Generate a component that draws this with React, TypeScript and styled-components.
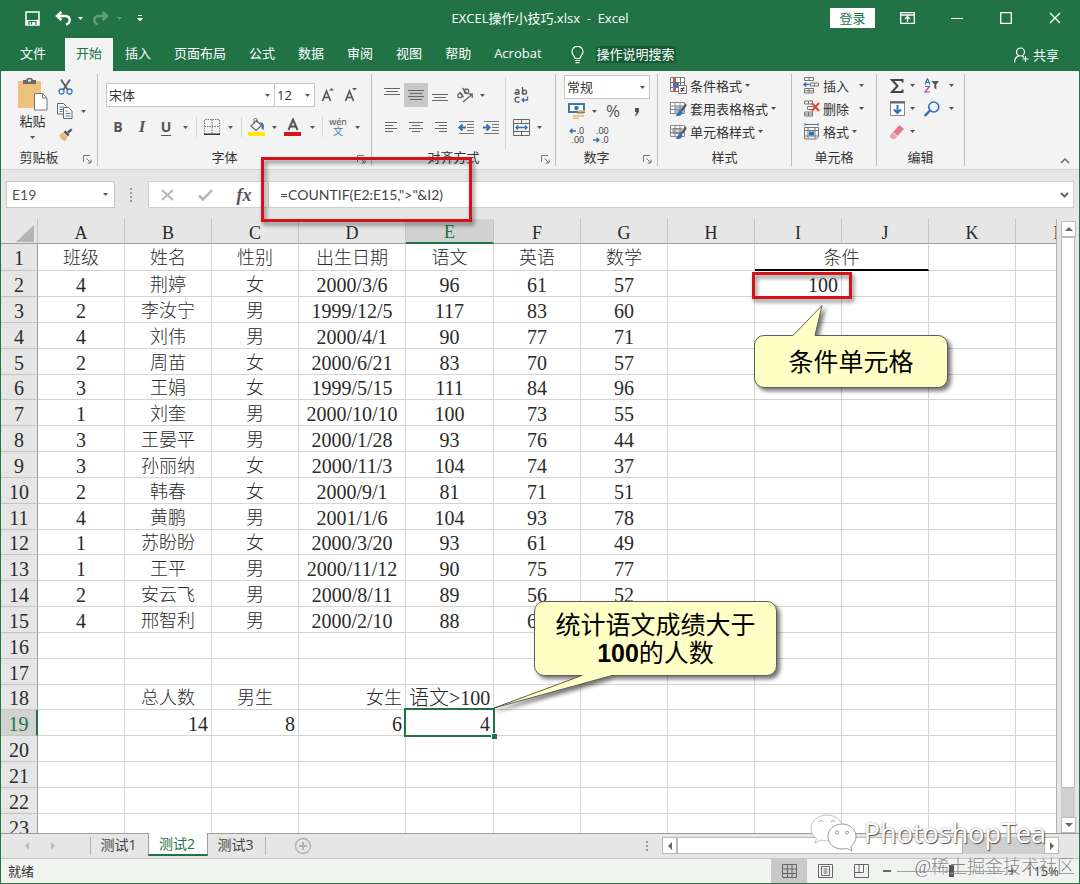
import React from 'react';
import styled, { createGlobalStyle, css } from 'styled-components';

const GREEN = '#217346';
const UI = "'Open Sans', 'Noto Sans CJK SC', sans-serif";
const CELL = "'Liberation Serif', 'Noto Sans CJK SC', serif";

const Global = createGlobalStyle`
  *, *::before, *::after { box-sizing: border-box; }
  body { margin: 0; background: #fff; }
  button, input, select { font: inherit; color: inherit; }
  button { padding: 0; border: 0; background: none; cursor: default; }
  svg { display: block; flex: none; }
`;

const Window = styled.div`
  position: relative;
  display: flex;
  flex-direction: column;
  height: 100vh;
  border: 1px solid ${GREEN};
  border-top: 0;
  background: #e6e6e6;
  overflow: hidden;
  font: 13px/20px ${UI};
  color: #333;
`;

/* ---------- title bar ---------- */
const TitleBar = styled.header`
  flex: none;
  display: grid;
  grid-template-columns: 1fr auto 1fr;
  align-items: center;
  height: 38px;
  padding-bottom: 2px;
  background: ${GREEN};
  color: #fff;
`;
const QuickAccess = styled.div`
  display: flex;
  align-items: center;
  padding-left: 13px;
`;
const Title = styled.h1`
  margin: 0;
  font-size: 13px;
  font-weight: 400;
  white-space: pre;
`;
const WindowButtons = styled.div`
  display: flex;
  align-items: center;
  justify-content: flex-end;
`;
const SignIn = styled.button`
  width: 45px;
  height: 20px;
  margin-right: 8px;
  background: #fff;
  color: ${GREEN};
`;
const Slot = styled.button<{ $w: number; $on?: boolean; $dim?: boolean }>`
  flex: none;
  display: flex;
  align-items: center;
  justify-content: center;
  width: ${p => p.$w}px;
  height: 24px;
  background: ${p => (p.$on ? '#c8c8c8' : 'none')};
  opacity: ${p => (p.$dim ? 0.3 : 1)};
`;

/* ---------- ribbon tabs ---------- */
const Tabs = styled.nav`
  flex: none;
  display: flex;
  align-items: stretch;
  gap: 1px;
  height: 33px;
  padding: 0 20px 0 8px;
  background: ${GREEN};
  color: #fff;
`;
const Tab = styled.button<{ $active?: boolean; $file?: boolean }>`
  padding: 0 11px 3px;
  margin-right: ${p => (p.$file ? 7 : 0)}px;
  background: ${p => (p.$active ? '#f3f3f3' : 'none')};
  color: ${p => (p.$active ? GREEN : '#fff')};
`;
const TellMe = styled.button`
  display: flex;
  align-items: center;
  gap: 12px;
  padding: 0 12px 0 17px;
  span { padding: 0 1px; line-height: 17px; background: #185c37; }
`;
const Share = styled.button`
  display: flex;
  align-items: center;
  gap: 4px;
  margin-left: auto;
`;

/* ---------- ribbon ---------- */
const Ribbon = styled.section`
  flex: none;
  display: flex;
  height: 99px;
  padding: 3px 0;
  background: #f3f3f3;
  border-bottom: 1px solid #d2d2d2;
`;
const Group = styled.div<{ $w: number }>`
  flex: none;
  display: flex;
  flex-direction: column;
  width: ${p => p.$w}px;
  border-right: 1px solid #bdbdbd;
`;
const GroupBody = styled.div<{ $pad?: string }>`
  flex: 1;
  display: flex;
  padding: ${p => p.$pad ?? '0'};
`;
const GroupFoot = styled.div`
  display: flex;
  align-items: center;
  height: 20px;
  margin-bottom: -3px;
  padding-bottom: 4px;
  text-align: center;
  span { flex: 1; }
  button { padding: 4px 5px 0 6px; }
`;
const Stack = styled.div<{ $gap?: number; $line?: boolean }>`
  display: flex;
  flex-direction: column;
  gap: ${p => p.$gap ?? 0}px;
  ${p => p.$line && css`border-right: 1px solid #d6d6d6; margin: -6px 0 0; padding: 6px 3px 0 0;`}
`;
const Row = styled.div`
  display: flex;
  align-items: center;
  height: 24px;
`;
const Divider = styled.i<{ $w: number }>`
  flex: none;
  width: ${p => p.$w}px;
  height: 20px;
  background: linear-gradient(#d6d6d6, #d6d6d6) center / 1px 100% no-repeat;
`;
const PasteButton = styled.button`
  display: flex;
  flex-direction: column;
  align-items: center;
  width: 35px;
  padding-top: 2px;
  svg:last-child { margin-top: 5px; }
`;
const Combo = styled.label<{ $w: number; $h?: number }>`
  display: flex;
  align-items: center;
  width: ${p => p.$w}px;
  height: ${p => p.$h ?? 24}px;
  padding-right: 4px;
  background: #fff;
  border: 1px solid #c6c6c6;
  & + & { border-left: 0; }
  select, input {
    flex: 1;
    min-width: 0;
    height: 100%;
    padding: 0 2px;
    border: 0;
    outline: 0;
    background: none;
    appearance: none;
  }
`;
const Glyph = styled.b<{ $italic?: boolean; $under?: boolean; $size?: number }>`
  font-size: ${p => p.$size ?? 14}px;
  line-height: 16px;
  font-style: ${p => (p.$italic ? 'italic' : 'normal')};
  font-family: ${p => (p.$italic ? "'Liberation Serif', serif" : 'inherit')};
  border-bottom: ${p => (p.$under ? '1px solid #555' : '0')};
  color: #555;
`;
const Command = styled.button`
  display: flex;
  align-items: center;
  gap: 3px;
  height: 23px;
`;
const CaretGap = styled.i<{ $w: number }>`
  width: ${p => p.$w}px;
`;
const Collapse = styled.button`
  align-self: flex-end;
  margin: 0 9px 2px auto;
`;

/* ---------- formula bar ---------- */
const FormulaBar = styled.div`
  flex: none;
  display: flex;
  height: 49px;
  padding: 11px 5px;
`;
const NameBox = styled(Combo)`
  padding-right: 6px;
  input { padding-left: 5px; font-family: Lato, sans-serif; font-size: 14px; color: #555; }
`;
const Dots = styled.div`
  flex: none;
  display: flex;
  align-items: center;
  justify-content: center;
  width: 33px;
`;
const FxBox = styled.div`
  flex: none;
  display: flex;
  align-items: center;
  width: 120px;
  background: #fff;
  border: 1px solid #d0d0d0;
  border-right-color: #e6e6e6;
`;
const FormulaInput = styled.label`
  flex: 1;
  display: flex;
  align-items: center;
  background: #fff;
  border: 1px solid #d0d0d0;
  padding-right: 4px;
  input {
    flex: 1;
    min-width: 0;
    padding: 0 11px;
    border: 0;
    outline: 0;
    background: none;
    font: 14px/20px Lato, sans-serif;
    color: #444;
  }
`;

/* ---------- worksheet ---------- */
const Sheet = styled.main`
  position: relative;
  flex: 1;
  min-height: 0;
  display: flex;
`;
const GridArea = styled.div`
  flex: 1;
  min-width: 0;
  overflow: hidden;
  border-right: 1px solid #b0b0b0;
  background: #fff;
`;
const Table = styled.table`
  table-layout: fixed;
  width: 1101px;
  border-collapse: separate;
  border-spacing: 0;
  font: 18px/22px ${CELL};
  color: #2a2a2a;
  thead tr { height: 25px; }
  tbody tr { height: 26px; }
  tbody tr:nth-child(6n) { height: 25px; }
  tbody tr:first-child { height: 27px; }
`;
const ColHead = styled.th<{ $on?: boolean }>`
  padding: 4px 0 0;
  font-weight: 400;
  background: ${p => (p.$on ? '#d2d2d2' : '#e6e6e6')};
  color: ${p => (p.$on ? GREEN : '#2a2a2a')};
  border-right: 1px solid #c4c4c4;
  border-bottom: ${p => (p.$on ? `2px solid ${GREEN}` : '1px solid #9c9c9c')};
  line-height: 19px;
`;
const Corner = styled(ColHead)`
  svg { margin: 0 3px 0 auto; }
`;
const RowHead = styled.th<{ $on?: boolean }>`
  padding: 2px 0 0;
  font-size: 20px;
  font-weight: 400;
  background: ${p => (p.$on ? '#d2d2d2' : '#e6e6e6')};
  color: ${p => (p.$on ? GREEN : '#2a2a2a')};
  border-right: ${p => (p.$on ? `2px solid ${GREEN}` : '1px solid #9c9c9c')};
  border-bottom: 1px solid #c4c4c4;
`;
const Cell = styled.td<{ $right?: boolean; $num?: boolean; $sel?: boolean; $rule?: boolean }>`
  padding: 2px 3px 0;
  text-align: ${p => (p.$right ? 'right' : 'center')};
  font-size: ${p => (p.$num ? 20 : 18)}px;
  font-weight: 300;
  white-space: nowrap;
  border-right: 1px solid #d4d4d4;
  border-bottom: ${p => (p.$rule ? '2px solid #000' : '1px solid #d4d4d4')};
  ${p => p.$sel && css`
    position: relative;
    &::before {
      content: '';
      position: absolute;
      inset: -2px;
      border: 2px solid ${GREEN};
    }
    &::after {
      content: '';
      position: absolute;
      right: -4px;
      bottom: -4px;
      width: 6px;
      height: 6px;
      background: ${GREEN};
      border: solid #fff;
      border-width: 1px 0 0 1px;
    }
  `}
`;
const VScroll = styled.div`
  flex: none;
  display: flex;
  flex-direction: column;
  width: 22px;
  padding: 2px 4px 0;
`;
const ScrollButton = styled.button`
  flex: none;
  display: flex;
  align-items: center;
  justify-content: center;
  width: 15px;
  height: 16px;
  background: #fff;
  border: 1px solid #bababa;
`;
const Track = styled.div<{ $row?: boolean }>`
  flex: 1;
  display: flex;
  flex-direction: ${p => (p.$row ? 'row' : 'column')};
  background: #cfcfcf;
`;
const Thumb = styled.div<{ $share: number }>`
  flex: 0 0 ${p => p.$share}%;
  background: #fff;
  border: 1px solid #bababa;
`;

/* ---------- annotations ---------- */
const Mark = styled.div<{ $x: number; $y: number; $w: number; $h: number }>`
  position: absolute;
  left: ${p => p.$x}px;
  top: ${p => p.$y}px;
  width: ${p => p.$w}px;
  height: ${p => p.$h}px;
  border: 3px solid #d01418;
  filter: drop-shadow(2px 3px 2px rgba(0, 0, 0, 0.5));
  pointer-events: none;
`;
const Callout = styled.aside<{ $x: number; $y: number; $w: number; $h: number }>`
  position: absolute;
  left: ${p => p.$x}px;
  top: ${p => p.$y}px;
  width: ${p => p.$w}px;
  height: ${p => p.$h}px;
  display: flex;
  align-items: center;
  justify-content: center;
  text-align: center;
  font: 25px/28px 'Liberation Sans', 'Noto Sans CJK SC', sans-serif;
  color: #000;
  svg {
    position: absolute;
    inset: 0;
    overflow: visible;
    filter: drop-shadow(3px 3px 2px rgba(0, 0, 0, 0.55));
  }
  p { position: relative; margin: 0; }
`;

/* ---------- bottom bars ---------- */
const SheetBar = styled.div`
  flex: none;
  display: flex;
  height: 26px;
  border-top: 1px solid #9c9c9c;
  border-bottom: 1px solid #c6c6c6;
  font-size: 14px;
`;
const TabNav = styled.div`
  display: flex;
  align-items: center;
  gap: 18px;
  width: 90px;
  padding-left: 22px;
  border-right: 1px solid #b0b0b0;
  margin: 3px 0;
`;
const SheetTab = styled.button<{ $active?: boolean }>`
  width: ${p => (p.$active ? 60 : 57)}px;
  height: 23px;
  margin-top: -1px;
  padding-right: 2px;
  line-height: 20px;
  color: ${p => (p.$active ? GREEN : '#444')};
  ${p => p.$active && css`
    background: #fff;
    border: solid #9c9c9c;
    border-width: 0 1px;
    border-bottom: 2px solid ${GREEN};
  `}
`;
const AddSheet = styled.button`
  margin: 3px 0;
  padding-left: 28px;
  border-left: 1px solid #b0b0b0;
`;
const HScroll = styled.div`
  flex: none;
  display: flex;
  width: 397px;
  height: 17px;
  margin: 3px 20px 0 7px;
  button { height: 17px; }
`;
const HandleDots = styled.div`
  margin-left: auto;
  padding: 6px 6px 0 0;
`;
const StatusBar = styled.footer`
  flex: none;
  display: flex;
  align-items: center;
  height: 24px;
  padding: 0 20px 0 7px;
  background: #f1f3f1;
  output { margin-right: auto; }
`;
const ZoomRange = styled.input`
  width: 108px;
  height: 14px;
  margin: 0 2px;
  appearance: none;
  background: linear-gradient(#a0a0a0, #a0a0a0) center / 100% 1px no-repeat;
  &::-webkit-slider-thumb {
    appearance: none;
    width: 5px;
    height: 12px;
    background: #555;
  }
`;
const ZoomValue = styled.button`
  width: 42px;
  text-align: right;
`;
const Watermark = styled.div`
  position: absolute;
  right: 33px;
  bottom: 30px;
  display: flex;
  align-items: center;
  gap: 6px;
  font: 27px/40px 'Open Sans', sans-serif;
  color: #fff;
  text-shadow: 1px 1px 1px #555, 0 0 2px #999;
  pointer-events: none;
`;
const Credit = styled.div`
  position: absolute;
  right: 4px;
  bottom: 3px;
  font: 300 18px/26px 'Liberation Serif', 'Noto Sans CJK SC', serif;
  color: rgba(100, 100, 100, 0.8);
  text-shadow: 0 0 1px #fff;
  pointer-events: none;
`;

/* ---------- drawings ---------- */
const Caret = ({ color = '#555' }: { color?: string }) => (
  <svg width="5" height="3" viewBox="0 0 5 3"><path d="M0 0h5L2.5 3z" fill={color} /></svg>
);
const Lines = ({ w, rows }: { w: number[]; rows: 'left' | 'center' | 'right' }) => (
  <svg width="16" height="14" viewBox="0 0 16 14" stroke="#666" fill="none">
    {w.map((n, i) => {
      const x = rows === 'left' ? 1 : rows === 'right' ? 15 - n : 8 - n / 2;
      return <path key={i} d={`M${x} ${i * 3 + 2.5}h${n}`} />;
    })}
  </svg>
);
const Launcher = () => (
  <button aria-label="对话框启动器">
    <svg width="9" height="9" viewBox="0 0 9 9" fill="none" stroke="#777">
      <path d="M.5 7V.5H7M3.500 3.500l4 4M8 4.500V8H4.500" />
    </svg>
  </button>
);
const SaveIcon = () => (
  <svg width="15" height="15" viewBox="0 0 15 15" fill="none" stroke="#fff" strokeWidth="1.500">
    <path d="M1 1h13v13H1z" /><path d="M1 9h13v5H1z" fill="#fff" stroke="none" /><path d="M4 14v-3.500h7V14M6.500 11v2.500" stroke={GREEN} strokeWidth="1.200" />
  </svg>
);
const UndoIcon = ({ flip }: { flip?: boolean }) => (
  <svg width="17" height="15" viewBox="0 0 17 15" fill="none" stroke="#fff" strokeWidth="2.400">
    <g transform={flip ? 'matrix(-1 0 0 1 17 0)' : undefined}>
      <path d="M6.500 1L2 5l4.500 4M2.500 5H10.500c5.500.5 5.500 7 .5 8.500" />
    </g>
  </svg>
);
const CustomizeIcon = () => (
  <svg width="6" height="7" viewBox="0 0 6 7" fill="#fff"><path d="M1 0h4v1H1zM0 3h6L3 6.500z" /></svg>
);
const RibbonDisplayIcon = () => (
  <svg width="15" height="12" viewBox="0 0 15 12" fill="none" stroke="#fff" strokeWidth="1.300">
    <path d="M.7.700h13.600v10.600H.700zM.700 3h13.600M7.500 10V5M5 7l2.500-2.500L10 7" />
  </svg>
);
const BulbIcon = () => (
  <svg width="13" height="18" viewBox="0 0 13 18" fill="none" stroke="#fff" strokeWidth="1.200">
    <path d="M4 12.500c0-2.500-3-3.500-3-6.700a5.500 5.500 0 0 1 11 0c0 3.200-3 4.200-3 6.700zM4 14.500h5M4.500 16.700h4" />
  </svg>
);
const ShareIcon = () => (
  <svg width="15" height="16" viewBox="0 0 15 16" fill="none" stroke="#fff" strokeWidth="1.200">
    <circle cx="6.500" cy="5" r="4" /><path d="M.6 15.500c0-3.500 1.900-5.700 4-6.500M8.500 9l1.500 1.500M11.500 9v6M8.500 12h6" />
  </svg>
);
const PasteIcon = () => (
  <svg width="31" height="34" viewBox="0 0 31 34">
    <path d="M1 4h23v27H1z" fill="#eec27c" />
    <path d="M6 7V3h3c0-3 7-3 7 0h3v4z" fill="#6b6b6b" /><path d="M11 2.500h3v2h-3z" fill="#f3f3f3" />
    <path d="M17.500 16.500h8l4.500 4.500v12H17.500z" fill="#fff" stroke="#777" /><path d="M25.500 16.500V21H30" fill="none" stroke="#777" />
  </svg>
);
const CutIcon = () => (
  <svg width="15" height="16" viewBox="0 0 15 16" fill="none">
    <path d="M3 .5l6.500 10M12 .5l-6.500 10" stroke="#5c5c5c" strokeWidth="1.800" />
    <circle cx="3.500" cy="12.500" r="2.500" stroke="#3f78b8" strokeWidth="1.300" /><circle cx="11.500" cy="12.500" r="2.500" stroke="#3f78b8" strokeWidth="1.300" />
  </svg>
);
const CopyIcon = () => (
  <svg width="16" height="16" viewBox="0 0 16 16" fill="#fff" stroke="#666">
    <path d="M.5.500h6l3 3V11h-9z" /><path d="M2.500 4h4M2.500 6.500h4M2.500 8.500h3" stroke="#3f78b8" />
    <path d="M6.500 4.500h5l3.500 3.500v7.500H6.500z" /><path d="M8.500 8h2M8.500 10.500h5M8.500 13h5" stroke="#3f78b8" />
  </svg>
);
const PainterIcon = () => (
  <svg width="15" height="14" viewBox="0 0 15 14">
    <path d="M1 7l4-2.500L9.500 9 7 13.500C4 12 2 10 1 7z" fill="#ecb877" />
    <path d="M5.500 4l2-1.500 4 4-1.500 2z" fill="#555" /><path d="M9 3.500L13 .5l1.500 1.500L11 5.500z" fill="#555" />
  </svg>
);
const GrowIcon = ({ down }: { down?: boolean }) => (
  <svg width="14" height="16" viewBox="0 0 14 16" fill="none" stroke="#555" strokeWidth="1.600">
    <path d="M1.500 14L5.500 4l4 10M3 10.500h5" />
    <path d={down ? 'M8 1h5L10.500 3.500z' : 'M8 3.500h5L10.500 1z'} fill="#3f5f7f" stroke="none" />
  </svg>
);
const BordersIcon = () => (
  <svg width="16" height="16" viewBox="0 0 16 16" fill="none" stroke="#777">
    <path d="M.5 15V.5h15V15M8 .5V15M.5 7.500h15" strokeDasharray="1.500 1" /><path d="M0 15.200h16" stroke="#333" strokeWidth="1.500" />
  </svg>
);
const FillIcon = () => (
  <svg width="18" height="18" viewBox="0 0 18 18" fill="none">
    <path d="M8.500 2.500l5 5-5.500 5-5-4.500z" fill="#fff" stroke="#666" strokeWidth="1.200" />
    <path d="M6 6V1.500c0-1.500 3-1.500 3 0V5" stroke="#666" /><path d="M12 4c4.500 1 4.500 4 3.500 8-1.500-.5-2.500-2-2-4.500z" fill="#3f78b8" />
    <path d="M0 14h17v4H0z" fill="#ffeb00" />
  </svg>
);
const FontColorIcon = () => (
  <svg width="18" height="18" viewBox="0 0 18 18" fill="none">
    <path d="M4.500 12L9 1.500 13.500 12M6 8.500h6" stroke="#555" strokeWidth="2" /><path d="M0 14h17v4H0z" fill="#d8141c" />
  </svg>
);
const Phonetic = styled.span`
  display: flex;
  flex-direction: column;
  align-items: center;
  font-size: 9px;
  line-height: 9px;
  color: #444;
  em { font-style: normal; font-size: 10px; line-height: 11px; color: #3f78b8; }
`;
const OrientIcon = () => (
  <svg width="18" height="16" viewBox="0 0 18 16" fill="none" stroke="#666" strokeWidth="1.300">
    <circle cx="4" cy="8.500" r="2.200" /><path d="M3.500 5l4 5M6.500 1l4.500 6" /><circle cx="10.500" cy="4.200" r="2.200" />
    <path d="M7 15L16 7.500M12.500 7H16.200V11" />
  </svg>
);
const WrapIcon = () => (
  <svg width="15" height="17" viewBox="0 0 15 17" fill="none" stroke="#555" strokeWidth="1.300">
    <path d="M1.500 3.200c2-1 3.500-.2 3.500 1V7.500M5 5.200c-3 0-4 .3-4 1.300s2.500 1.500 4 0M8.500 0v7.500" /><circle cx="10.500" cy="5.200" r="2" />
    <path d="M5.500 10.700c-2-1-4.500-.5-4.500 2s2.500 3 4.500 2" /><path d="M13.500 9.500v3.500H8M10 11l-2 2 2 2" stroke="#3f78b8" />
  </svg>
);
const IndentIcon = ({ inc }: { inc?: boolean }) => (
  <svg width="17" height="15" viewBox="0 0 17 15" fill="none" stroke="#777">
    <path d="M1 1.500h15M9 4.500h7M9 7.500h7M9 10.500h7M1 13.500h15" />
    <path d={inc ? 'M0 7.500h6M3.500 4.500l3 3-3 3' : 'M2 7.500h6M4.500 4.500l-3 3 3 3'} stroke="#2f6fb5" strokeWidth="2" />
  </svg>
);
const MergeIcon = () => (
  <svg width="17" height="17" viewBox="0 0 17 17" fill="none" stroke="#666">
    <path d="M.5.500h16v16H.500zM.500 4.500h16M.500 12.500h16M8.500 .5v4M8.500 12.500v4" />
    <path d="M3 8.500h11M5 6.500l-2 2 2 2M12 6.500l2 2-2 2" stroke="#2f6fb5" strokeWidth="1.300" />
  </svg>
);
const CurrencyIcon = () => (
  <svg width="18" height="16" viewBox="0 0 18 16" fill="none">
    <path d="M1 1h15v8H1z" fill="#fff" stroke="#3f78a8" strokeWidth="2" /><circle cx="8.500" cy="5" r="2.300" fill="#3f78a8" />
    <path d="M10 8h7M9 10.500h7M5 13h6M10 13h6M5 15.300h6" stroke="#eeb877" strokeWidth="1.600" />
  </svg>
);
const DecimalText = styled.span`
  display: flex;
  flex-direction: column;
  font: 9px/9px 'Open Sans', sans-serif;
  color: #333;
  span { display: flex; align-items: center; justify-content: flex-end; gap: 1px; }
`;
const TinyArrow = ({ right }: { right?: boolean }) => (
  <svg width="7" height="6" viewBox="0 0 7 6" fill="none" stroke="#2f6fb5" strokeWidth="1.300">
    <path d={right ? 'M0 3h6M3.500.700L6 3 3.500 5.300' : 'M7 3H1M3.500.700L1 3l2.500 2.300'} />
  </svg>
);
const CondIcon = () => (
  <svg width="17" height="17" viewBox="0 0 17 17" fill="#fff" stroke="#777">
    <path d="M.5.500h14v14H.500zM5.500.500v14M10.500.500v14M.500 5.500h14M.500 10.500h14" />
    <path d="M3 1h3v4H3z" fill="#d9534a" stroke="none" /><path d="M3 6h6v4H3z" fill="#3f78b8" stroke="none" /><path d="M3 11h3v3H3z" fill="#d9534a" stroke="none" />
    <path d="M8.500 8.500h8v8h-8z" /><path d="M10.500 11.500h4M10.500 13.500h4M14 10l-3 5" stroke="#444" />
  </svg>
);
const TableFormatIcon = ({ single }: { single?: boolean }) => (
  <svg width="17" height="16" viewBox="0 0 17 16" fill="#fff" stroke="#888">
    <path d="M.5 1.500h14v11H.500z" />
    {single ? <path d="M3 4.500h8v5H3z" fill="#c6d8ea" /> : <path d="M5 5h9v7H5z" fill="#a8c4e0" stroke="none" />}
    <path d="M.5 5h14M.500 8.500h14M5 1.500v11M10 1.500v11" fill="none" />
    <path d="M16 2l-5.500 7 1.500 1.500L16.500 5z" fill="#555" stroke="none" /><path d="M10.500 9c-3 .5-2 4-5 5.500 3 1.500 7 0 7-3.500z" fill="#2f6fb5" stroke="none" />
  </svg>
);
const InsertIcon = () => (
  <svg width="17" height="17" viewBox="0 0 17 17" fill="none" stroke="#777">
    <path d="M1.500.500h9v3h-9zM6 .5v3M1.500 11.500h9v4.500h-9zM6 11.500V16M1.500 13.800h9M7.500 6h8v3h-8zM11.500 6v3" /><path d="M6.500 7.500H1M3 5.500l-2 2 2 2" stroke="#2f6fb5" strokeWidth="1.500" />
  </svg>
);
const DeleteIcon = () => (
  <svg width="17" height="17" viewBox="0 0 17 17" fill="none" stroke="#777">
    <path d="M1.500 1h8v3h-8zM5.500 1v3M4.500 6.500h6v3h-6zM1.500 12h8v4h-8zM5.500 12v4M1.500 14h8" /><path d="M9 3l7 8M16 3l-7 8" stroke="#dc4b32" strokeWidth="2" />
  </svg>
);
const FormatIcon = () => (
  <svg width="17" height="17" viewBox="0 0 17 17" fill="none" stroke="#777">
    <path d="M1.500 4.500h14v9l-2 2.500h-12zM5 4.500v11M12 4.500v11M1.500 7.500h14M1.500 13h14" /><path d="M6 8.500h5v4H6z" fill="#2f6fb5" stroke="none" />
    <path d="M2 1.500h13M2 0v3M15 0v3" stroke="#3f78b8" />
  </svg>
);
const SigmaIcon = () => (
  <svg width="14" height="14" viewBox="0 0 14 14" fill="none" stroke="#444" strokeWidth="2">
    <path d="M12.500 3.500V1H2l5.500 6L2 13h10.500v-2.500" />
  </svg>
);
const SortIcon = () => (
  <svg width="16" height="15" viewBox="0 0 16 15" fill="none" strokeWidth="1.200">
    <path d="M1 6.500L3.500.500 6 6.500M2 4.500h3" stroke="#2f6fb5" /><path d="M1 8.500h4.500L1 14h5" stroke="#9a50a0" />
    <path d="M7.500 3H15l-2.700 3.500v5l-2-1.500V6.500z" fill="#555" />
  </svg>
);
const FillDownIcon = () => (
  <svg width="15" height="15" viewBox="0 0 15 15" fill="#fff" stroke="#888">
    <path d="M.5.500h14v14H.500z" /><path d="M0 1.500h15" stroke="#666" strokeWidth="2" /><path d="M7.500 4v8M4 8.500l3.500 3.500L11 8.500" fill="none" stroke="#2f6fb5" strokeWidth="2" />
  </svg>
);
const FindIcon = () => (
  <svg width="16" height="16" viewBox="0 0 16 16" fill="none" stroke="#2f6fb5">
    <circle cx="9.800" cy="6" r="5" strokeWidth="1.600" /><path d="M6 9.500L.8 15" strokeWidth="2.400" />
  </svg>
);
const EraserIcon = () => (
  <svg width="14" height="14" viewBox="0 0 14 14">
    <path d="M9.500 0L14 4 7.500 11 3 7z" fill="#e8798f" /><path d="M2.500 7.500L7 11.500 5 14H2L0 12v-2z" fill="#f0a0b0" />
  </svg>
);
const GripDots = ({ n = 4 }: { n?: number }) => (
  <svg width="3" height={n * 4} viewBox={`0 0 3 ${n * 4}`} fill="#9a9a9a">
    {Array.from({ length: n }, (_, i) => <path key={i} d={`M0 ${i * 4 + 1}h2v2H0z`} />)}
  </svg>
);
const Tri = ({ dir, color = '#666' }: { dir: 'up' | 'down' | 'left' | 'right'; color?: string }) => {
  const d = { up: 'M0 6h8L4 2z', down: 'M0 2h8L4 6z', left: 'M6 0v8L2 4z', right: 'M2 0v8l4-4z' }[dir];
  return <svg width="8" height="8" viewBox="0 0 8 8" fill={color}><path d={d} /></svg>;
};
const WeChatIcon = () => (
  <svg width="48" height="38" viewBox="0 0 48 38" fill="#fff" stroke="#9a9a9a" strokeWidth="1">
    <path d="M17 1C8 1 1 7 1 14.500c0 4 2 7.500 5.500 10L5 29l6-3c2 .6 4 .9 6 .9 9 0 16-5.500 16-12.500S26 1 17 1z" stroke="#c4c4c4" />
    <path d="M32 10c-8 0-14 5.500-14 12.500S24 35 32 35c1.500 0 3-.2 4.500-.7L42 37l-1.200-4.500c3.200-2.300 5.200-6 5.200-10C46 15.500 40 10 32 10z" />
    <path d="M9 8c1-2 3-2 4 0M21 8c1-2 3-2 4 0" fill="none" /><circle cx="27" cy="18.500" r="1.500" /><circle cx="37" cy="18.500" r="1.500" />
  </svg>
);

/* ---------- data ---------- */
const letters = 'ABCDEFGHIJKL'.split('');
const widths = [87, 87, 87, 107, 88, 87, 87, 87, 87, 87, 87, 87];
const students: string[][] = [
  ['4', '荆婷', '女', '2000/3/6', '96', '61', '57'],
  ['2', '李汝宁', '男', '1999/12/5', '117', '83', '60'],
  ['4', '刘伟', '男', '2000/4/1', '90', '77', '71'],
  ['2', '周苗', '女', '2000/6/21', '83', '70', '57'],
  ['3', '王娟', '女', '1999/5/15', '111', '84', '96'],
  ['1', '刘奎', '男', '2000/10/10', '100', '73', '55'],
  ['3', '王晏平', '男', '2000/1/28', '93', '76', '44'],
  ['3', '孙丽纳', '女', '2000/11/3', '104', '74', '37'],
  ['2', '韩春', '女', '2000/9/1', '81', '71', '51'],
  ['4', '黄鹏', '男', '2001/1/6', '104', '93', '78'],
  ['1', '苏盼盼', '女', '2000/3/20', '93', '61', '49'],
  ['1', '王平', '男', '2000/11/12', '90', '75', '77'],
  ['2', '安云飞', '男', '2000/8/11', '89', '56', '52'],
  ['4', '邢智利', '男', '2000/2/10', '88', '67', ''],
];
const sheet: string[][] = [
  ['班级', '姓名', '性别', '出生日期', '语文', '英语', '数学', '', '条件'],
  ...students,
  [], [],
  ['', '总人数', '男生', '女生', '语文>100'],
  ['', '14', '8', '6', '4'],
  [], [], [], [],
];
sheet[1][8] = '100';

const isRight = (r: number, c: number) => r === 18 || (r === 17 && c > 2) || (r === 1 && c === 8);

export default function App() {
  return (
    <Window>
      <Global />
      <TitleBar>
        <QuickAccess>
          <Slot $w={36} aria-label="保存"><SaveIcon /></Slot>
          <Slot $w={26} aria-label="撤消"><UndoIcon /></Slot>
          <Slot $w={8} aria-label="撤消列表"><Caret color="#fff" /></Slot>
          <Slot $w={32} $dim aria-label="恢复"><UndoIcon flip /></Slot>
          <Slot $w={6} $dim aria-label="恢复列表"><Caret color="#fff" /></Slot>
          <Slot $w={36} aria-label="自定义快速访问工具栏"><CustomizeIcon /></Slot>
        </QuickAccess>
        <Title>{'EXCEL操作小技巧.xlsx  -  Excel'}</Title>
        <WindowButtons>
          <SignIn>登录</SignIn>
          <Slot $w={49} aria-label="功能区显示选项"><RibbonDisplayIcon /></Slot>
          <Slot $w={49} aria-label="最小化"><svg width="12" height="12" stroke="#fff"><path d="M0 6.500h12" /></svg></Slot>
          <Slot $w={49} aria-label="最大化"><svg width="12" height="12" fill="none" stroke="#fff" strokeWidth="1.300"><path d="M.7.700h10.600v10.600H.700z" /></svg></Slot>
          <Slot $w={49} aria-label="关闭"><svg width="12" height="12" stroke="#fff" strokeWidth="1.400"><path d="M1 1l10 10M11 1L1 11" /></svg></Slot>
        </WindowButtons>
      </TitleBar>

      <Tabs>
        <Tab $file>文件</Tab>
        <Tab $active>开始</Tab>
        {['插入', '页面布局', '公式', '数据', '审阅', '视图', '帮助', 'Acrobat'].map(t => <Tab key={t}>{t}</Tab>)}
        <TellMe><BulbIcon /><span>操作说明搜索</span></TellMe>
        <Share><ShareIcon />共享</Share>
      </Tabs>

      <Ribbon>
        <Group $w={97}>
          <GroupBody $pad="1px 0 0 14px">
            <PasteButton><PasteIcon />粘贴<Caret /></PasteButton>
            <Stack>
              <Row><Slot $w={30} aria-label="剪切"><CutIcon /></Slot></Row>
              <Row><Slot $w={30} aria-label="复制"><CopyIcon /></Slot><Slot $w={6} aria-label="复制选项"><Caret /></Slot></Row>
              <Row><Slot $w={30} aria-label="格式刷"><PainterIcon /></Slot></Row>
            </Stack>
          </GroupBody>
          <GroupFoot><span>剪贴板</span><Launcher /></GroupFoot>
        </Group>

        <Group $w={274}>
          <GroupBody $pad="9px 0 0 8px">
            <Stack $gap={8}>
              <Row>
                <Combo $w={169}><select aria-label="字体"><option>宋体</option></select><Caret /></Combo>
                <Combo $w={40}><select aria-label="字号"><option>12</option></select><Caret /></Combo>
                <Slot $w={26} aria-label="增大字号"><GrowIcon /></Slot>
                <Slot $w={20} aria-label="减小字号"><GrowIcon down /></Slot>
              </Row>
              <Row>
                <Slot $w={24}><Glyph>B</Glyph></Slot>
                <Slot $w={24}><Glyph $italic $size={17}>I</Glyph></Slot>
                <Slot $w={24}><Glyph $under>U</Glyph></Slot>
                <Slot $w={14} aria-label="下划线选项"><Caret /></Slot>
                <Divider $w={8} />
                <Slot $w={24} aria-label="边框"><BordersIcon /></Slot>
                <Slot $w={12} aria-label="边框选项"><Caret /></Slot>
                <Divider $w={10} />
                <Slot $w={22} aria-label="填充颜色"><FillIcon /></Slot>
                <Slot $w={12} aria-label="填充颜色选项"><Caret /></Slot>
                <Slot $w={26} aria-label="字体颜色"><FontColorIcon /></Slot>
                <Slot $w={12} aria-label="字体颜色选项"><Caret /></Slot>
                <Divider $w={8} />
                <Slot $w={24}><Phonetic>wén<em>文</em></Phonetic></Slot>
                <Slot $w={14} aria-label="拼音选项"><Caret /></Slot>
              </Row>
            </Stack>
          </GroupBody>
          <GroupFoot><span>字体</span><Launcher /></GroupFoot>
        </Group>

        <Group $w={184}>
          <GroupBody $pad="9px 0 0 8px">
            <Stack $gap={8} $line>
              <Row>
                <Slot $w={24} aria-label="顶端对齐"><svg width="16" height="16" stroke="#666"><path d="M0 1.500h16M2 4.500h12M0 7.500h16" /></svg></Slot>
                <Slot $w={24} $on aria-label="垂直居中"><svg width="16" height="16" stroke="#666"><path d="M0 3.500h16M2 6.500h12M0 9.500h16M2 12.500h12" /></svg></Slot>
                <Slot $w={24} aria-label="底端对齐"><svg width="16" height="16" stroke="#666"><path d="M0 7.500h16M2 10.500h12M0 13.500h16" /></svg></Slot>
                <Slot $w={26} aria-label="方向"><OrientIcon /></Slot>
                <Slot $w={8} aria-label="方向选项"><Caret /></Slot>
              </Row>
              <Row>
                <Slot $w={24} aria-label="左对齐"><Lines w={[12, 8, 12, 8]} rows="left" /></Slot>
                <Slot $w={24} aria-label="居中"><Lines w={[14, 8, 14, 8]} rows="center" /></Slot>
                <Slot $w={24} aria-label="右对齐"><Lines w={[12, 8, 12, 8]} rows="right" /></Slot>
                <Slot $w={28} aria-label="减少缩进量"><IndentIcon /></Slot>
                <Slot $w={22} aria-label="增加缩进量"><IndentIcon inc /></Slot>
              </Row>
            </Stack>
            <Stack $gap={8}>
              <Row><Slot $w={30} aria-label="自动换行"><WrapIcon /></Slot></Row>
              <Row><Slot $w={30} aria-label="合并后居中"><MergeIcon /></Slot><Slot $w={6} aria-label="合并选项"><Caret /></Slot></Row>
            </Stack>
          </GroupBody>
          <GroupFoot><span>对齐方式</span><Launcher /></GroupFoot>
        </Group>

        <Group $w={102}>
          <GroupBody $pad="1px 0 0 8px">
            <Stack>
              <Row><Combo $w={86}><select aria-label="数字格式"><option>常规</option></select><Caret /></Combo></Row>
              <Row>
                <Slot $w={25} aria-label="会计数字格式"><CurrencyIcon /></Slot>
                <Slot $w={10} aria-label="会计格式选项"><Caret /></Slot>
                <Slot $w={28}><Glyph as="span" $size={17}>%</Glyph></Slot>
                <Slot $w={20} aria-label="千位分隔样式"><svg width="6" height="9" fill="#555"><path d="M1 1h4v4L2 9H1l1.500-4H1z" /></svg></Slot>
              </Row>
              <Row>
                <Slot $w={25}><DecimalText><span><TinyArrow />.0</span><span>.00</span></DecimalText></Slot>
                <Slot $w={24}><DecimalText><span>.00</span><span><TinyArrow right />.0</span></DecimalText></Slot>
              </Row>
            </Stack>
          </GroupBody>
          <GroupFoot><span>数字</span><Launcher /></GroupFoot>
        </Group>

        <Group $w={134}>
          <GroupBody $pad="0 0 0 12px">
            <Stack>
              <Command><CondIcon />条件格式<Caret /></Command>
              <Command><TableFormatIcon />套用表格格式<Caret /></Command>
              <Command><TableFormatIcon single />单元格样式<Caret /></Command>
            </Stack>
          </GroupBody>
          <GroupFoot><span>样式</span></GroupFoot>
        </Group>

        <Group $w={85}>
          <GroupBody $pad="0 0 0 11px">
            <Stack>
              <Command><InsertIcon />插入<CaretGap $w={4} /><Caret /></Command>
              <Command><DeleteIcon />删除<CaretGap $w={4} /><Caret /></Command>
              <Command><FormatIcon />格式<Caret /></Command>
            </Stack>
          </GroupBody>
          <GroupFoot><span>单元格</span></GroupFoot>
        </Group>

        <Group $w={88}>
          <GroupBody $pad="0 0 0 10px">
            <Stack>
              <Command>
                <Slot $w={20} aria-label="自动求和" as="span"><SigmaIcon /></Slot><Caret />
                <Slot $w={28} aria-label="排序和筛选" as="span"><SortIcon /></Slot><Caret />
              </Command>
              <Command>
                <Slot $w={20} aria-label="填充" as="span"><FillDownIcon /></Slot><Caret />
                <Slot $w={28} aria-label="查找和选择" as="span"><FindIcon /></Slot><Caret />
              </Command>
              <Command><Slot $w={20} aria-label="清除" as="span"><EraserIcon /></Slot><Caret /></Command>
            </Stack>
          </GroupBody>
          <GroupFoot><span>编辑</span></GroupFoot>
        </Group>
        <Collapse aria-label="折叠功能区">
          <svg width="10" height="7" fill="none" stroke="#666" strokeWidth="1.500"><path d="M1 6l4-4 4 4" /></svg>
        </Collapse>
      </Ribbon>

      <FormulaBar>
        <NameBox $w={109} $h={27}><input aria-label="名称框" defaultValue="E19" /><Caret /></NameBox>
        <Dots><GripDots /></Dots>
        <FxBox>
          <Slot $w={36} aria-label="取消"><svg width="13" height="12" stroke="#b5b5b5" strokeWidth="1.800"><path d="M1 1l11 10M12 1L1 11" /></svg></Slot>
          <Slot $w={40} aria-label="输入"><svg width="15" height="12" fill="none" stroke="#b5b5b5" strokeWidth="2.500"><path d="M1 6.500l4 4L14 1" /></svg></Slot>
          <Slot $w={38} aria-label="插入函数"><Glyph $italic $size={18}>fx</Glyph></Slot>
        </FxBox>
        <FormulaInput>
          <input aria-label="编辑栏" defaultValue={'=COUNTIF(E2:E15,">"&I2)'} />
          <svg width="9" height="6" fill="none" stroke="#666" strokeWidth="2"><path d="M1 1l3.500 3.500L8 1" /></svg>
        </FormulaInput>
      </FormulaBar>

      <Sheet>
        <GridArea>
          <Table>
            <colgroup>
              <col style={{ width: 37 }} />
              {widths.map((w, i) => <col key={i} style={{ width: w }} />)}
            </colgroup>
            <thead>
              <tr>
                <Corner aria-label="全选"><svg width="18" height="17" fill="#b4b4b4"><path d="M18 0v17H0z" /></svg></Corner>
                {letters.map(l => <ColHead key={l} scope="col" $on={l === 'E'}>{l}</ColHead>)}
              </tr>
            </thead>
            <tbody>
              {sheet.map((row, r) => (
                <tr key={r}>
                  <RowHead scope="row" $on={r === 18}>{r + 1}</RowHead>
                  {letters.map((l, c) => {
                    if (r === 0 && c === 9) return null;
                    const text = row[c] ?? '';
                    return (
                      <Cell
                        key={l}
                        colSpan={r === 0 && c === 8 ? 2 : undefined}
                        $rule={r === 0 && c === 8}
                        $num={/\d/.test(text)}
                        $right={isRight(r, c)}
                        $sel={r === 18 && c === 4}
                      >
                        {text}
                      </Cell>
                    );
                  })}
                </tr>
              ))}
            </tbody>
          </Table>
        </GridArea>
        <VScroll>
          <ScrollButton aria-label="向上滚动"><Tri dir="up" /></ScrollButton>
          <Track><Thumb $share={95} /></Track>
          <ScrollButton aria-label="向下滚动"><Tri dir="down" /></ScrollButton>
        </VScroll>

        <Mark $x={260} $y={-62} $w={211} $h={65} />
        <Mark $x={751} $y={53} $w={100} $h={27} />
        <Callout $x={753} $y={116} $w={194} $h={53}>
          <svg width="194" height="53" fill="#ffffc6" stroke="#5f5f50">
            <path d="M10 .5h29L68-29.500 61 .5h123a9.500 9.500 0 0 1 9.500 9.500v33a9.500 9.500 0 0 1-9.500 9.500H10A9.500 9.500 0 0 1 .5 43V10A9.500 9.500 0 0 1 10 .5z" />
          </svg>
          <p>条件单元格</p>
        </Callout>
        <Callout $x={533} $y={382} $w={243} $h={75}>
          <svg width="243" height="75" fill="#ffffc6" stroke="#5f5f50">
            <path d="M10 .5h223a9.500 9.500 0 0 1 9.500 9.500v55a9.500 9.500 0 0 1-9.500 9.500H78L-40 107 48 74.500H10A9.500 9.500 0 0 1 .5 65V10A9.500 9.500 0 0 1 10 .5z" />
          </svg>
          <p>统计语文成绩大于<br /><b>100</b>的人数</p>
        </Callout>
      </Sheet>

      <SheetBar>
        <TabNav><Tri dir="left" color="#b8b8b8" /><Tri dir="right" color="#b8b8b8" /></TabNav>
        <SheetTab>测试1</SheetTab>
        <SheetTab $active>测试2</SheetTab>
        <SheetTab>测试3</SheetTab>
        <AddSheet aria-label="新工作表">
          <svg width="18" height="18" fill="none" stroke="#b0b0b0" strokeWidth="1.300"><circle cx="9" cy="9" r="7.500" /><path d="M9 5v8M5 9h8" strokeWidth="1.800" /></svg>
        </AddSheet>
        <HandleDots><GripDots n={3} /></HandleDots>
        <HScroll>
          <ScrollButton aria-label="向左滚动"><Tri dir="left" /></ScrollButton>
          <Track $row><Thumb $share={78} /></Track>
          <ScrollButton aria-label="向右滚动"><Tri dir="right" /></ScrollButton>
        </HScroll>
      </SheetBar>

      <StatusBar>
        <output>就绪</output>
        <Slot $w={36} $on aria-label="普通"><svg width="15" height="15" fill="none" stroke="#666"><path d="M.5.500h14v13H.500zM5.500.500v13M10 .5v13M.500 5h14M.500 9.500h14" /></svg></Slot>
        <Slot $w={36} aria-label="页面布局"><svg width="15" height="15" fill="none" stroke="#666"><path d="M.5.500h14v13H.500zM3.500 2.500h8v9h-8zM5.500 5h4M5.500 7h4M5.500 9h4" /></svg></Slot>
        <Slot $w={36} aria-label="分页预览"><svg width="15" height="15" fill="none" stroke="#666"><path d="M.5.500h14v13H.500zM5 .5v8M9.500 .5v8M.500 8.500h9" /></svg></Slot>
        <Slot $w={16} aria-label="缩小"><svg width="8" height="2" fill="#666"><path d="M0 0h8v2H0z" /></svg></Slot>
        <ZoomRange type="range" min={10} max={220} defaultValue={115} aria-label="显示比例" />
        <Slot $w={10} aria-label="放大"><svg width="8" height="8" stroke="#555" strokeWidth="1.500"><path d="M0 4h8M4 0v8" /></svg></Slot>
        <ZoomValue>115%</ZoomValue>
      </StatusBar>

      <Watermark><WeChatIcon />PhotoshopTea</Watermark>
      <Credit>@稀土掘金技术社区</Credit>
    </Window>
  );
}
